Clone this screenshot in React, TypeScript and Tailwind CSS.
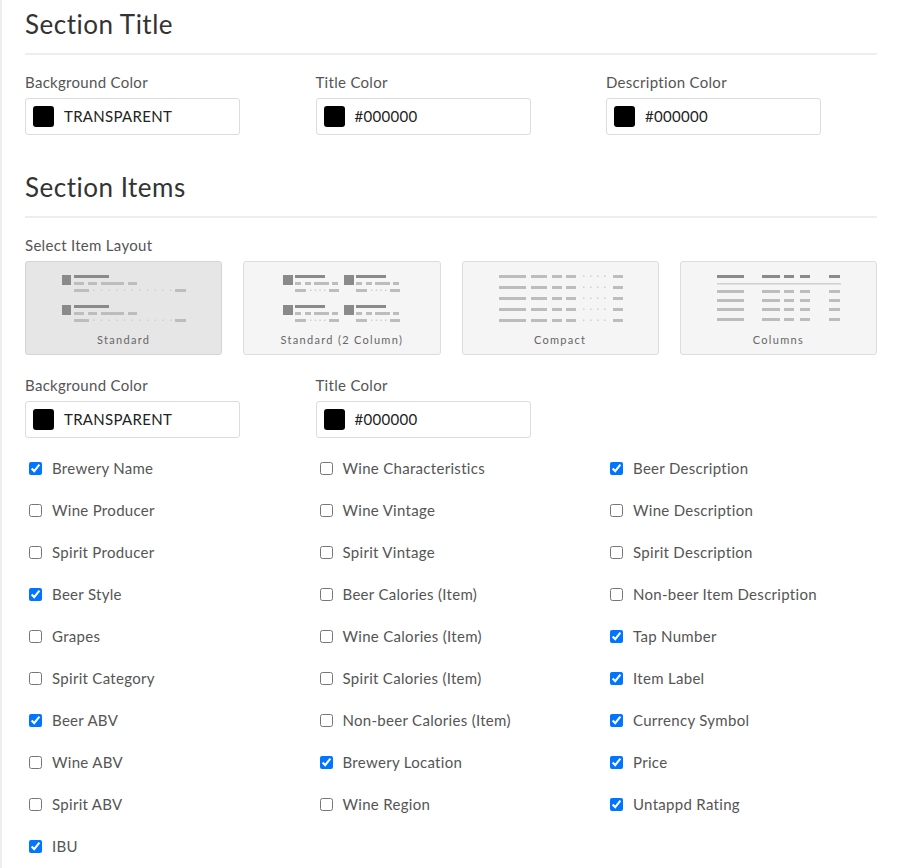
import React from "react"

type Seg = [number, number]

const DARK = "#8a8a8a"
const LIGHT = "#bdbdbd"
const DOT = "#cfcfcf"

const Bars = ({ y, segs, fill }: { y: number; segs: Seg[]; fill: string }) => (
  <>
    {segs.map(([x, w], i) => (
      <rect key={i} x={x} y={y} width={w} height={3} fill={fill} />
    ))}
  </>
)

const Dots = ({ y, from, to, count }: { y: number; from: number; to: number; count: number }) => {
  const step = (to - from) / (count - 1)
  return (
    <>
      {Array.from({ length: count }).map((_, i) => (
        <rect key={i} x={from + i * step} y={y + 0.5} width={1.5} height={1.5} fill={DOT} />
      ))}
    </>
  )
}

const StandardIcon = () => (
  <svg width="197" height="56" viewBox="0 0 197 56">
    {[0, 30].map((dy) => (
      <g key={dy}>
        <rect x={37} y={dy} width={9} height={10} fill={DARK} />
        <Bars y={dy} segs={[[49, 35]]} fill={DARK} />
        <Bars y={dy + 7} segs={[[49, 10], [63, 9], [76, 23], [103, 9]]} fill={LIGHT} />
        <Bars y={dy + 14} segs={[[49, 15], [150, 11]]} fill={LIGHT} />
        <Dots y={dy + 14} from={68} to={145} count={11} />
      </g>
    ))}
  </svg>
)

const TwoColumnIcon = () => (
  <svg width="197" height="56" viewBox="0 0 197 56">
    {[0, 30].map((dy) =>
      [0, 61].map((dx) => (
        <g key={`${dy}-${dx}`} transform={`translate(${dx} 0)`}>
          <rect x={40} y={dy} width={10} height={10} fill={DARK} />
          <Bars y={dy} segs={[[52, 30]]} fill={DARK} />
          <Bars y={dy + 7} segs={[[52, 6], [62, 6], [71, 15], [89, 6]]} fill={LIGHT} />
          <Bars y={dy + 14} segs={[[52, 11], [86, 10]]} fill={LIGHT} />
          <Dots y={dy + 14} from={67} to={81} count={4} />
        </g>
      ))
    )}
  </svg>
)

const CompactIcon = () => (
  <svg width="197" height="56" viewBox="0 0 197 56">
    {[0, 11, 22, 33, 44].map((y) => (
      <g key={y}>
        <Bars y={y} segs={[[37, 27], [69, 16], [90, 10], [104, 10], [151, 10]]} fill={LIGHT} />
        <Dots y={y} from={121} to={142} count={4} />
      </g>
    ))}
  </svg>
)

const ColumnsIcon = () => {
  const segs: Seg[] = [[37, 27], [82, 18], [104, 10], [120, 10], [149, 11]]
  return (
    <svg width="197" height="56" viewBox="0 0 197 56">
      <Bars y={0} segs={segs} fill={DARK} />
      <rect x={37} y={8} width={124} height={1.5} fill={DOT} />
      {[15, 24, 33, 43].map((y) => (
        <Bars key={y} y={y} segs={segs} fill={LIGHT} />
      ))}
    </svg>
  )
}

const layouts = [
  { name: "Standard", icon: <StandardIcon />, selected: true },
  { name: "Standard (2 Column)", icon: <TwoColumnIcon />, selected: false },
  { name: "Compact", icon: <CompactIcon />, selected: false },
  { name: "Columns", icon: <ColumnsIcon />, selected: false },
]

const ColorField = ({ label, value }: { label: string; value: string }) => (
  <div>
    <div className="text-[15px] leading-[20px] tracking-[0.3px] text-[#555]">{label}</div>
    <div className="mt-[6px] flex h-[37px] w-[215px] items-center rounded-[3px] border border-[#dcdcdc] bg-white pl-[7px]">
      <span className="h-[21px] w-[21px] rounded-[3px] bg-black" />
      <span className="ml-[10px] text-[15px] tracking-[0.3px] text-[#222]">{value}</span>
    </div>
  </div>
)

const SectionHeading = ({ children }: { children: React.ReactNode }) => (
  <div className="h-[55px] border-b-2 border-[#eeeeee]">
    <h2 className="text-[26px] leading-[48px] font-normal tracking-[0.5px] text-[#333]">{children}</h2>
  </div>
)

const columns: [string, boolean][][] = [
  [
    ["Brewery Name", true],
    ["Wine Producer", false],
    ["Spirit Producer", false],
    ["Beer Style", true],
    ["Grapes", false],
    ["Spirit Category", false],
    ["Beer ABV", true],
    ["Wine ABV", false],
    ["Spirit ABV", false],
    ["IBU", true],
  ],
  [
    ["Wine Characteristics", false],
    ["Wine Vintage", false],
    ["Spirit Vintage", false],
    ["Beer Calories (Item)", false],
    ["Wine Calories (Item)", false],
    ["Spirit Calories (Item)", false],
    ["Non-beer Calories (Item)", false],
    ["Brewery Location", true],
    ["Wine Region", false],
  ],
  [
    ["Beer Description", true],
    ["Wine Description", false],
    ["Spirit Description", false],
    ["Non-beer Item Description", false],
    ["Tap Number", true],
    ["Item Label", true],
    ["Currency Symbol", true],
    ["Price", true],
    ["Untappd Rating", true],
  ],
]

export default function App() {
  return (
    <div className="min-h-screen bg-white font-['Lato',sans-serif]">
      <div className="min-h-screen border-l-2 border-[#eeeeee] pl-[23px] pr-[20px]">
        <SectionHeading>Section Title</SectionHeading>

        <div className="mt-[17px] grid grid-cols-[repeat(3,271px)] gap-x-[19.5px]">
          <ColorField label="Background Color" value="TRANSPARENT" />
          <ColorField label="Title Color" value="#000000" />
          <ColorField label="Description Color" value="#000000" />
        </div>

        <div className="mt-[28px]">
          <SectionHeading>Section Items</SectionHeading>
        </div>

        <div className="mt-[17px] text-[15px] leading-[20px] tracking-[0.3px] text-[#555]">Select Item Layout</div>
        <div className="mt-[6px] grid grid-cols-4 gap-x-[21px]">
          {layouts.map((l) => (
            <div
              key={l.name}
              className={
                l.selected
                  ? "flex h-[94px] flex-col items-center rounded-[3px] border border-[#d4d4d4] bg-[#e6e6e6] pt-[13px]"
                  : "flex h-[94px] flex-col items-center rounded-[3px] border border-[#dddddd] bg-[#f5f5f5] pt-[13px]"
              }
            >
              <div className="flex h-[56px] justify-center">{l.icon}</div>
              <div className="mt-[2px] text-[11px] leading-[14px] tracking-[1.3px] text-[#666]">{l.name}</div>
            </div>
          ))}
        </div>

        <div className="mt-[20px] grid grid-cols-[repeat(3,271px)] gap-x-[19.5px]">
          <ColorField label="Background Color" value="TRANSPARENT" />
          <ColorField label="Title Color" value="#000000" />
        </div>

        <div className="mt-[9px] grid grid-cols-[repeat(3,271px)] gap-x-[19.5px]">
          {columns.map((col, ci) => (
            <div key={ci} className="flex flex-col">
              {col.map(([label, checked]) => (
                <label key={label} className="flex h-[42px] items-center">
                  <input
                    type="checkbox"
                    defaultChecked={checked}
                    className="ml-[4px] h-[13px] w-[13px]"
                  />
                  <span className="ml-[10px] text-[15px] tracking-[0.3px] text-[#555]">{label}</span>
                </label>
              ))}
            </div>
          ))}
        </div>
      </div>
    </div>
  )
}
